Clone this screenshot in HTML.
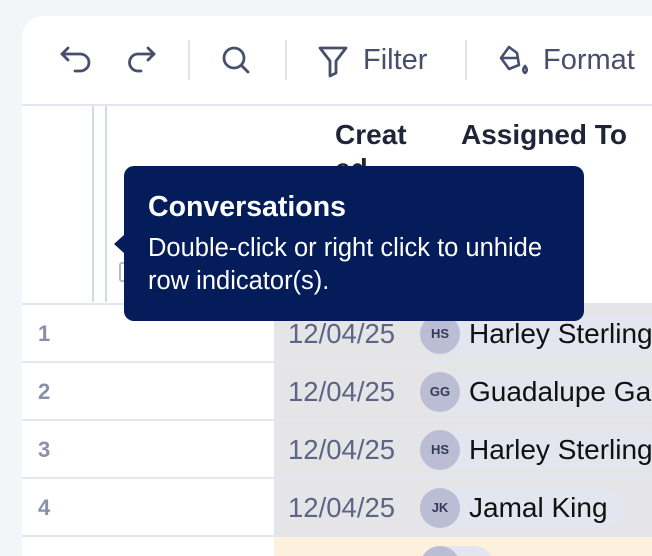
<!DOCTYPE html>
<html><head><meta charset="utf-8"><style>
*{margin:0;padding:0;box-sizing:border-box}
html,body{width:652px;height:556px;overflow:hidden}
body{background:#f4f5f9;font-family:"Liberation Sans",sans-serif;position:relative}
.card{position:absolute;left:22px;top:16px;width:630px;height:540px;background:#fff;border-top-left-radius:22px;overflow:hidden}
.abs{position:absolute}
.tb{color:#474f6c;font-size:29px;line-height:34px}
.sep{position:absolute;top:24px;width:2px;height:40px;background:#e1e4ee}
.hline{position:absolute;left:0;width:630px;height:2px;background:#e3e6f0}
.num{position:absolute;left:16px;font-size:22px;font-weight:bold;color:#8a90aa}
.gray{position:absolute;left:252px;width:400px;height:56px;background:#e5e5e7}
.date{position:absolute;left:266px;font-size:27.5px;color:#5c6585}
.chip{position:absolute;left:398px;height:40px;background:#e3e5ef;border-radius:20px;padding-left:49px;padding-right:17px;font-size:28px;line-height:40px;color:#111;white-space:nowrap}
.av{position:absolute;left:0;top:0;width:40px;height:40px;border-radius:50%;background:#babdd3;font-size:13px;font-weight:bold;color:#333a55;text-align:center;line-height:40px}
</style></head><body>
<div class="card">
  <svg class="abs" style="left:36px;top:26px" width="40" height="40" viewBox="0 0 40 40" fill="none" stroke="#474f6c" stroke-width="2.8" stroke-linecap="round" stroke-linejoin="round"><path d="M10 6 L4 12 L10 18"/><path d="M4 12 H22 a9 8.5 0 0 1 0 17 H17"/></svg>
  <svg class="abs" style="left:98px;top:26px" width="40" height="40" viewBox="0 0 40 40" fill="none" stroke="#474f6c" stroke-width="2.8" stroke-linecap="round" stroke-linejoin="round"><path d="M28 6 L34 12 L28 18"/><path d="M34 12 H18 a8.5 8.5 0 0 0 0 17 H21"/></svg>
  <div class="sep" style="left:166px"></div>
  <svg class="abs" style="left:196px;top:26px" width="38" height="38" viewBox="0 0 38 38" fill="none" stroke="#474f6c" stroke-width="2.8" stroke-linecap="round"><circle cx="16" cy="16" r="10"/><path d="M23.5 23.5 L30 30"/></svg>
  <div class="sep" style="left:263px"></div>
  <svg class="abs" style="left:294px;top:26px" width="36" height="40" viewBox="0 0 36 40" fill="none" stroke="#474f6c" stroke-width="2.8" stroke-linejoin="round"><path d="M4 6 H30 L20 19 V31 L14 34 V19 Z"/></svg>
  <div class="tb abs" style="left:341px;top:27px">Filter</div>
  <div class="sep" style="left:443px"></div>
  <svg class="abs" style="left:474px;top:26px" width="40" height="40" viewBox="0 0 40 40" fill="none" stroke="#474f6c" stroke-width="2.6" stroke-linejoin="round"><path d="M13 5 L5 16 L13 27 L23 23 L21 11 Z"/><path d="M5 16 H22"/><path d="M29 24 q-3.5 4.5 0 7 q3.5 -2.5 0 -7z"/></svg>
  <div class="tb abs" style="left:521px;top:27px">Format</div>
  <div class="hline" style="top:88px"></div>
  <div class="abs" style="left:70px;top:90px;width:2px;height:196px;background:#d6d9e6"></div>
  <div class="abs" style="left:83px;top:90px;width:2px;height:196px;background:#d6d9e6"></div>
  <div class="abs" style="left:97px;top:246px;width:8px;height:20px;border:2px solid #b4b8cc;border-radius:3px"></div>
  <div class="abs" style="left:313px;top:102px;font-size:28px;font-weight:bold;color:#1f2436;width:80px;height:50px;overflow:hidden;line-height:34px">Creat ed</div>
  <div class="abs" style="left:439px;top:102px;font-size:28px;font-weight:bold;color:#1f2436;line-height:34px">Assigned To</div>
  <div class="hline" style="top:287px"></div>
  <div class="gray" style="top:289px"></div>
  <div class="gray" style="top:347px"></div>
  <div class="gray" style="top:405px"></div>
  <div class="gray" style="top:463px"></div>
  <div class="abs" style="left:252px;top:521px;width:400px;height:40px;background:#fdf0dd"></div>
  <div class="hline" style="top:345px"></div>
  <div class="hline" style="top:403px"></div>
  <div class="hline" style="top:461px"></div>
  <div class="hline" style="top:519px"></div>
  <div class="num" style="top:305px">1</div>
  <div class="num" style="top:363px">2</div>
  <div class="num" style="top:421px">3</div>
  <div class="num" style="top:479px">4</div>
  <div class="date" style="top:302px">12/04/25</div>
  <div class="date" style="top:360px">12/04/25</div>
  <div class="date" style="top:418px">12/04/25</div>
  <div class="date" style="top:476px">12/04/25</div>
  <div class="chip" style="top:298px"><div class="av">HS</div>Harley Sterling</div>
  <div class="chip" style="top:356px"><div class="av">GG</div>Guadalupe Garcia</div>
  <div class="chip" style="top:414px"><div class="av">HS</div>Harley Sterling</div>
  <div class="chip" style="top:472px"><div class="av">JK</div>Jamal King</div>
  <div class="chip" style="top:530px"><div class="av"></div>&nbsp;</div>
</div>
<div class="abs" style="left:114px;top:235px;width:0;height:0;border-top:9px solid transparent;border-bottom:9px solid transparent;border-right:10px solid #041c59"></div>
<div class="abs" style="left:124px;top:166px;width:460px;height:155px;background:#041c59;border-radius:10px;color:#fff;padding:24px 10px 0 24px;overflow:hidden">
  <div style="font-size:28.5px;font-weight:bold;line-height:34px">Conversations</div>
  <div style="font-size:25.5px;line-height:33px;margin-top:8px;white-space:nowrap">Double-click or right click to unhide<br>row indicator(s).</div>
</div>
</body></html>
